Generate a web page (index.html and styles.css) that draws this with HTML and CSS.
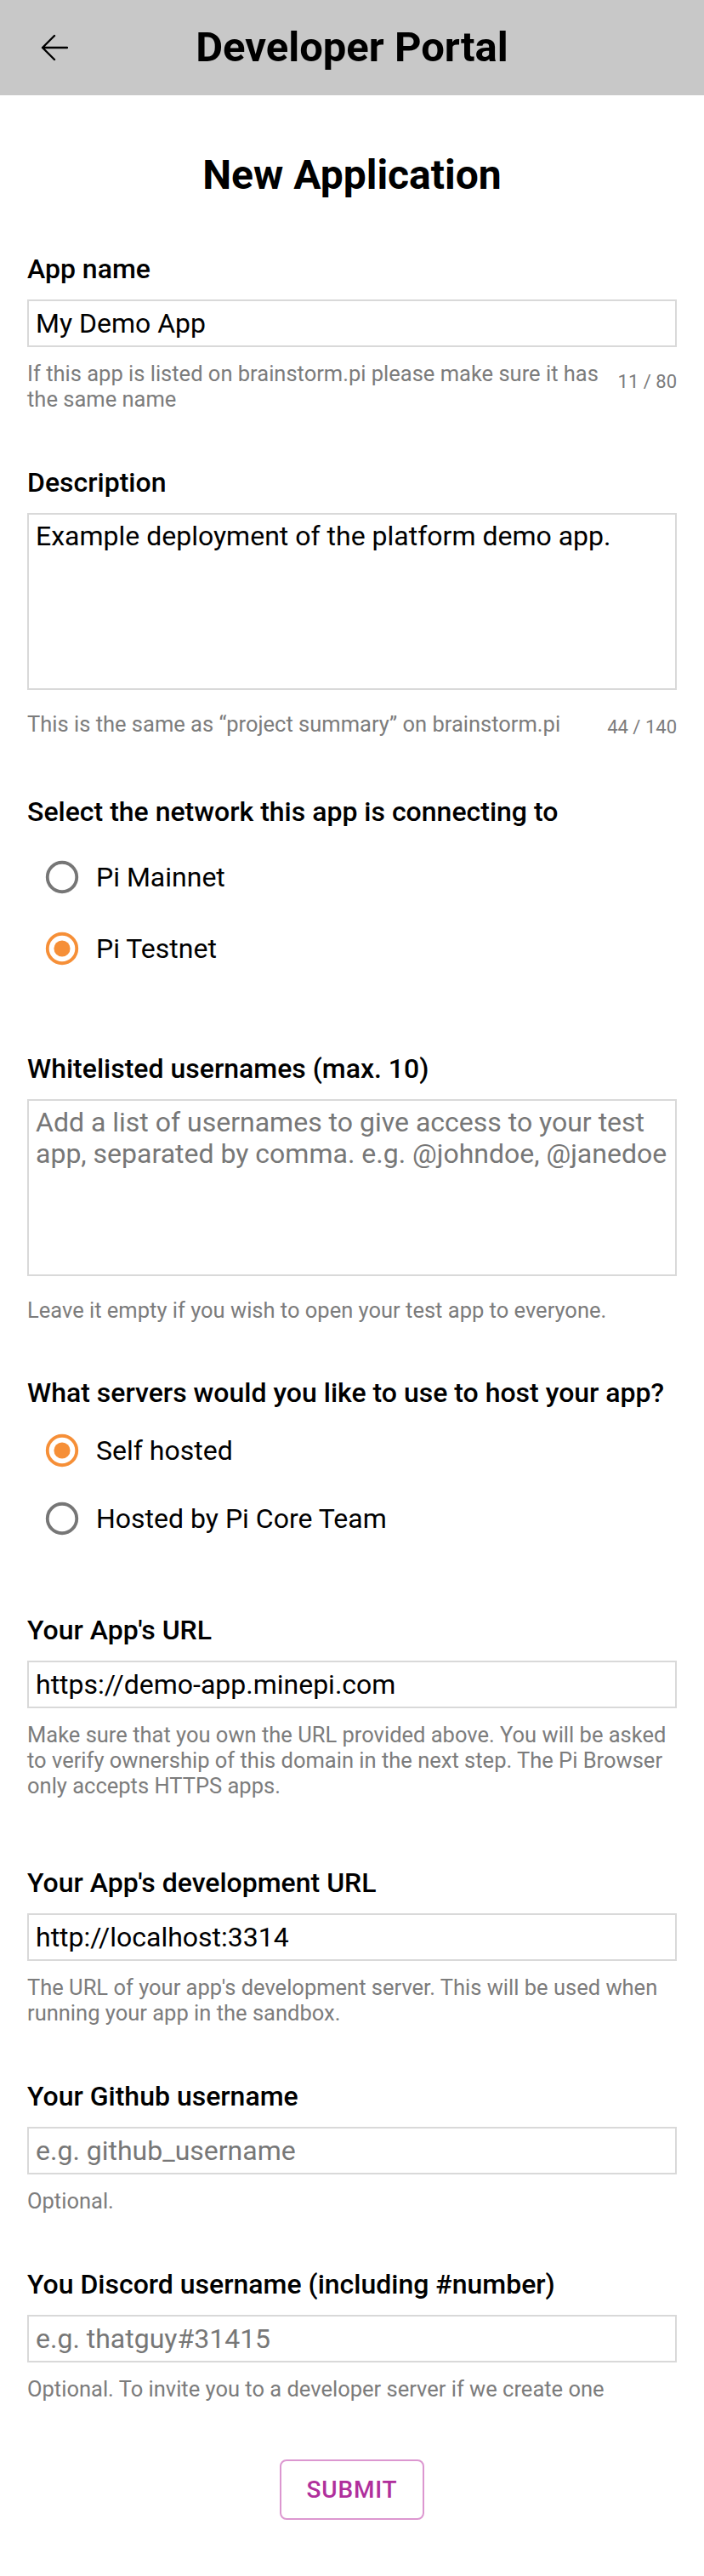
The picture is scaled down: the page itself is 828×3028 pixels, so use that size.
FILE: index.html
```html
<!DOCTYPE html>
<html lang="en">
<head>
<meta charset="utf-8">
<title>Developer Portal - New Application</title>
<link rel="stylesheet" href="styles.css">
</head>
<body>
<header class="topbar">
  <button class="back" type="button" aria-label="Back">
    <svg viewBox="0 0 32 32" width="32" height="32" aria-hidden="true"><path d="M31 16H2M16 2 2 16l14 14" fill="none" stroke="#000" stroke-width="2.4" stroke-linecap="round" stroke-linejoin="round"/></svg>
  </button>
  <h1 class="topbar-title">Developer Portal</h1>
  <span class="topbar-spacer"></span>
</header>

<main class="page">
  <h2 class="page-title">New Application</h2>

  <form class="form">
    <div class="field">
      <label class="field-label" for="app-name">App name</label>
      <input class="text-input" id="app-name" type="text" value="My Demo App">
      <div class="helper-row">
        <p class="helper">If this app is listed on brainstorm.pi please make sure it has the same name</p>
        <span class="counter counter-two-line">11 / 80</span>
      </div>
    </div>

    <div class="field">
      <label class="field-label" for="desc">Description</label>
      <textarea class="text-area" id="desc">Example deployment of the platform demo app.</textarea>
      <div class="helper-row helper-row-area">
        <p class="helper">This is the same as “project summary” on brainstorm.pi</p>
        <span class="counter">44 / 140</span>
      </div>
    </div>

    <div class="field field-network">
      <p class="field-label">Select the network this app is connecting to</p>
      <div class="radio-group radio-group-network">
        <label class="radio-row">
          <svg class="radio-icon" viewBox="0 0 24 24" aria-hidden="true"><circle cx="12" cy="12" r="9" fill="none" stroke="#767676" stroke-width="2"/></svg>
          <span class="radio-text">Pi Mainnet</span>
        </label>
        <label class="radio-row">
          <svg class="radio-icon" viewBox="0 0 24 24" aria-hidden="true"><circle cx="12" cy="12" r="9" fill="none" stroke="#f68f37" stroke-width="2"/><circle cx="12" cy="12" r="5" fill="#f68f37"/></svg>
          <span class="radio-text">Pi Testnet</span>
        </label>
      </div>
    </div>

    <div class="field field-after-network">
      <label class="field-label" for="whitelist">Whitelisted usernames (max. 10)</label>
      <textarea class="text-area" id="whitelist" placeholder="Add a list of usernames to give access to your test app, separated by comma. e.g. @johndoe, @janedoe"></textarea>
      <div class="helper-row helper-row-area">
        <p class="helper">Leave it empty if you wish to open your test app to everyone.</p>
      </div>
    </div>

    <div class="field field-servers">
      <p class="field-label">What servers would you like to use to host your app?</p>
      <div class="radio-group radio-group-servers">
        <label class="radio-row">
          <svg class="radio-icon" viewBox="0 0 24 24" aria-hidden="true"><circle cx="12" cy="12" r="9" fill="none" stroke="#f68f37" stroke-width="2"/><circle cx="12" cy="12" r="5" fill="#f68f37"/></svg>
          <span class="radio-text">Self hosted</span>
        </label>
        <label class="radio-row">
          <svg class="radio-icon" viewBox="0 0 24 24" aria-hidden="true"><circle cx="12" cy="12" r="9" fill="none" stroke="#767676" stroke-width="2"/></svg>
          <span class="radio-text">Hosted by Pi Core Team</span>
        </label>
      </div>
    </div>

    <div class="field field-url">
      <label class="field-label" for="url">Your App's URL</label>
      <input class="text-input" id="url" type="text" value="https://demo-app.minepi.com">
      <div class="helper-row">
        <p class="helper">Make sure that you own the URL provided above. You will be asked to verify ownership of this domain in the next step. The Pi Browser only accepts HTTPS apps.</p>
      </div>
    </div>

    <div class="field field-dev">
      <label class="field-label" for="dev-url">Your App's development URL</label>
      <input class="text-input" id="dev-url" type="text" value="http://localhost:3314">
      <div class="helper-row">
        <p class="helper">The URL of your app's development server. This will be used when running your app in the sandbox.</p>
      </div>
    </div>

    <div class="field">
      <label class="field-label" for="github">Your Github username</label>
      <input class="text-input" id="github" type="text" placeholder="e.g. github_username">
      <div class="helper-row">
        <p class="helper">Optional.</p>
      </div>
    </div>

    <div class="field">
      <label class="field-label" for="discord">You Discord username (including #number)</label>
      <input class="text-input" id="discord" type="text" placeholder="e.g. thatguy#31415">
      <div class="helper-row">
        <p class="helper">Optional. To invite you to a developer server if we create one</p>
      </div>
    </div>

    <div class="actions">
      <button class="submit" type="button">SUBMIT</button>
    </div>
  </form>
</main>
</body>
</html>
```

FILE: styles.css
```css
* {
  box-sizing: border-box;
}

html, body {
  margin: 0;
  padding: 0;
  background: #ffffff;
}

body {
  font-family: Roboto, "Liberation Sans", Arial, sans-serif;
  color: #000;
  width: 828px;
  min-height: 3028px;
}

/* ---------- top bar ---------- */
.topbar {
  height: 112px;
  background: #c8c8c8;
  display: grid;
  grid-template-columns: 1fr auto 1fr;
  align-items: center;
}

.back {
  justify-self: start;
  margin-left: 48px;
  padding: 0;
  width: 32px;
  height: 32px;
  border: 0;
  background: transparent;
  display: flex;
}

.topbar-title {
  margin: 0;
  font-size: 49px;
  line-height: 56px;
  font-weight: 700;
}

/* ---------- page ---------- */
.page {
  padding: 0 32px 65px;
}

.page-title {
  margin: 66px 0 0;
  text-align: center;
  font-size: 48px;
  line-height: 56px;
  font-weight: 700;
}

.form {
  display: flex;
  flex-direction: column;
}

.field {
  margin-top: 64px;
  display: flex;
  flex-direction: column;
}

.field:first-child {
  margin-top: 63px;
}

.field-label {
  display: block;
  margin: 0 0 17px;
  font-size: 32px;
  line-height: 38px;
  font-weight: 500;
}

.text-input,
.text-area {
  display: block;
  width: 100%;
  margin: 0;
  border: 2px solid #d9d9d9;
  border-radius: 0;
  background: #fff;
  font-family: Roboto, "Liberation Sans", Arial, sans-serif;
  font-size: 32px;
  color: #000;
  outline: none;
}

.text-input {
  height: 56px;
  padding: 0 8px;
}

.text-area {
  height: 208px;
  padding: 7px 8px;
  line-height: 37px;
  resize: none;
}

.text-input::placeholder,
.text-area::placeholder {
  color: #777;
  opacity: 1;
}

.helper-row {
  display: flex;
  align-items: flex-start;
  gap: 16px;
  margin-top: 16px;
}

.helper-row-area {
  margin-top: 25px;
}

.helper {
  flex: 1;
  margin: 0;
  font-size: 25.5px;
  line-height: 30px;
  color: #7c7c7c;
}

.counter {
  font-size: 22px;
  line-height: 22px;
  color: #7c7c7c;
  white-space: nowrap;
  margin-top: 8px;
}

.counter-two-line {
  margin-top: 14px;
}

/* ---------- radios ---------- */
.field-network {
  margin-top: 69px;
}

.field-network .field-label,
.field-servers .field-label {
  margin-bottom: 0;
}

.radio-group {
  display: flex;
  flex-direction: column;
}

.radio-group-network {
  margin-top: 16px;
}

.radio-group-network .radio-row {
  height: 84px;
}

.radio-group-servers {
  margin-top: 9px;
}

.radio-group-servers .radio-row {
  height: 80px;
}

.radio-row {
  display: flex;
  align-items: center;
  gap: 17px;
  padding-left: 18px;
}

.radio-icon {
  width: 46px;
  height: 46px;
  flex: none;
}

.radio-text {
  font-size: 32px;
  line-height: 38px;
}

.field-after-network {
  margin-top: 80px;
}

.field-servers {
  margin-top: 63px;
}

.field-url {
  margin-top: 72px;
}

.field-dev {
  margin-top: 80px;
}

/* ---------- submit ---------- */
.actions {
  display: flex;
  justify-content: center;
  margin-top: 68px;
}

.submit {
  width: 170px;
  height: 71px;
  border: 2px solid #dc97d0;
  border-radius: 8px;
  background: #fff;
  color: #b02f9c;
  font-family: Roboto, "Liberation Sans", Arial, sans-serif;
  font-size: 28px;
  font-weight: 500;
  letter-spacing: 0.8px;
}
```
